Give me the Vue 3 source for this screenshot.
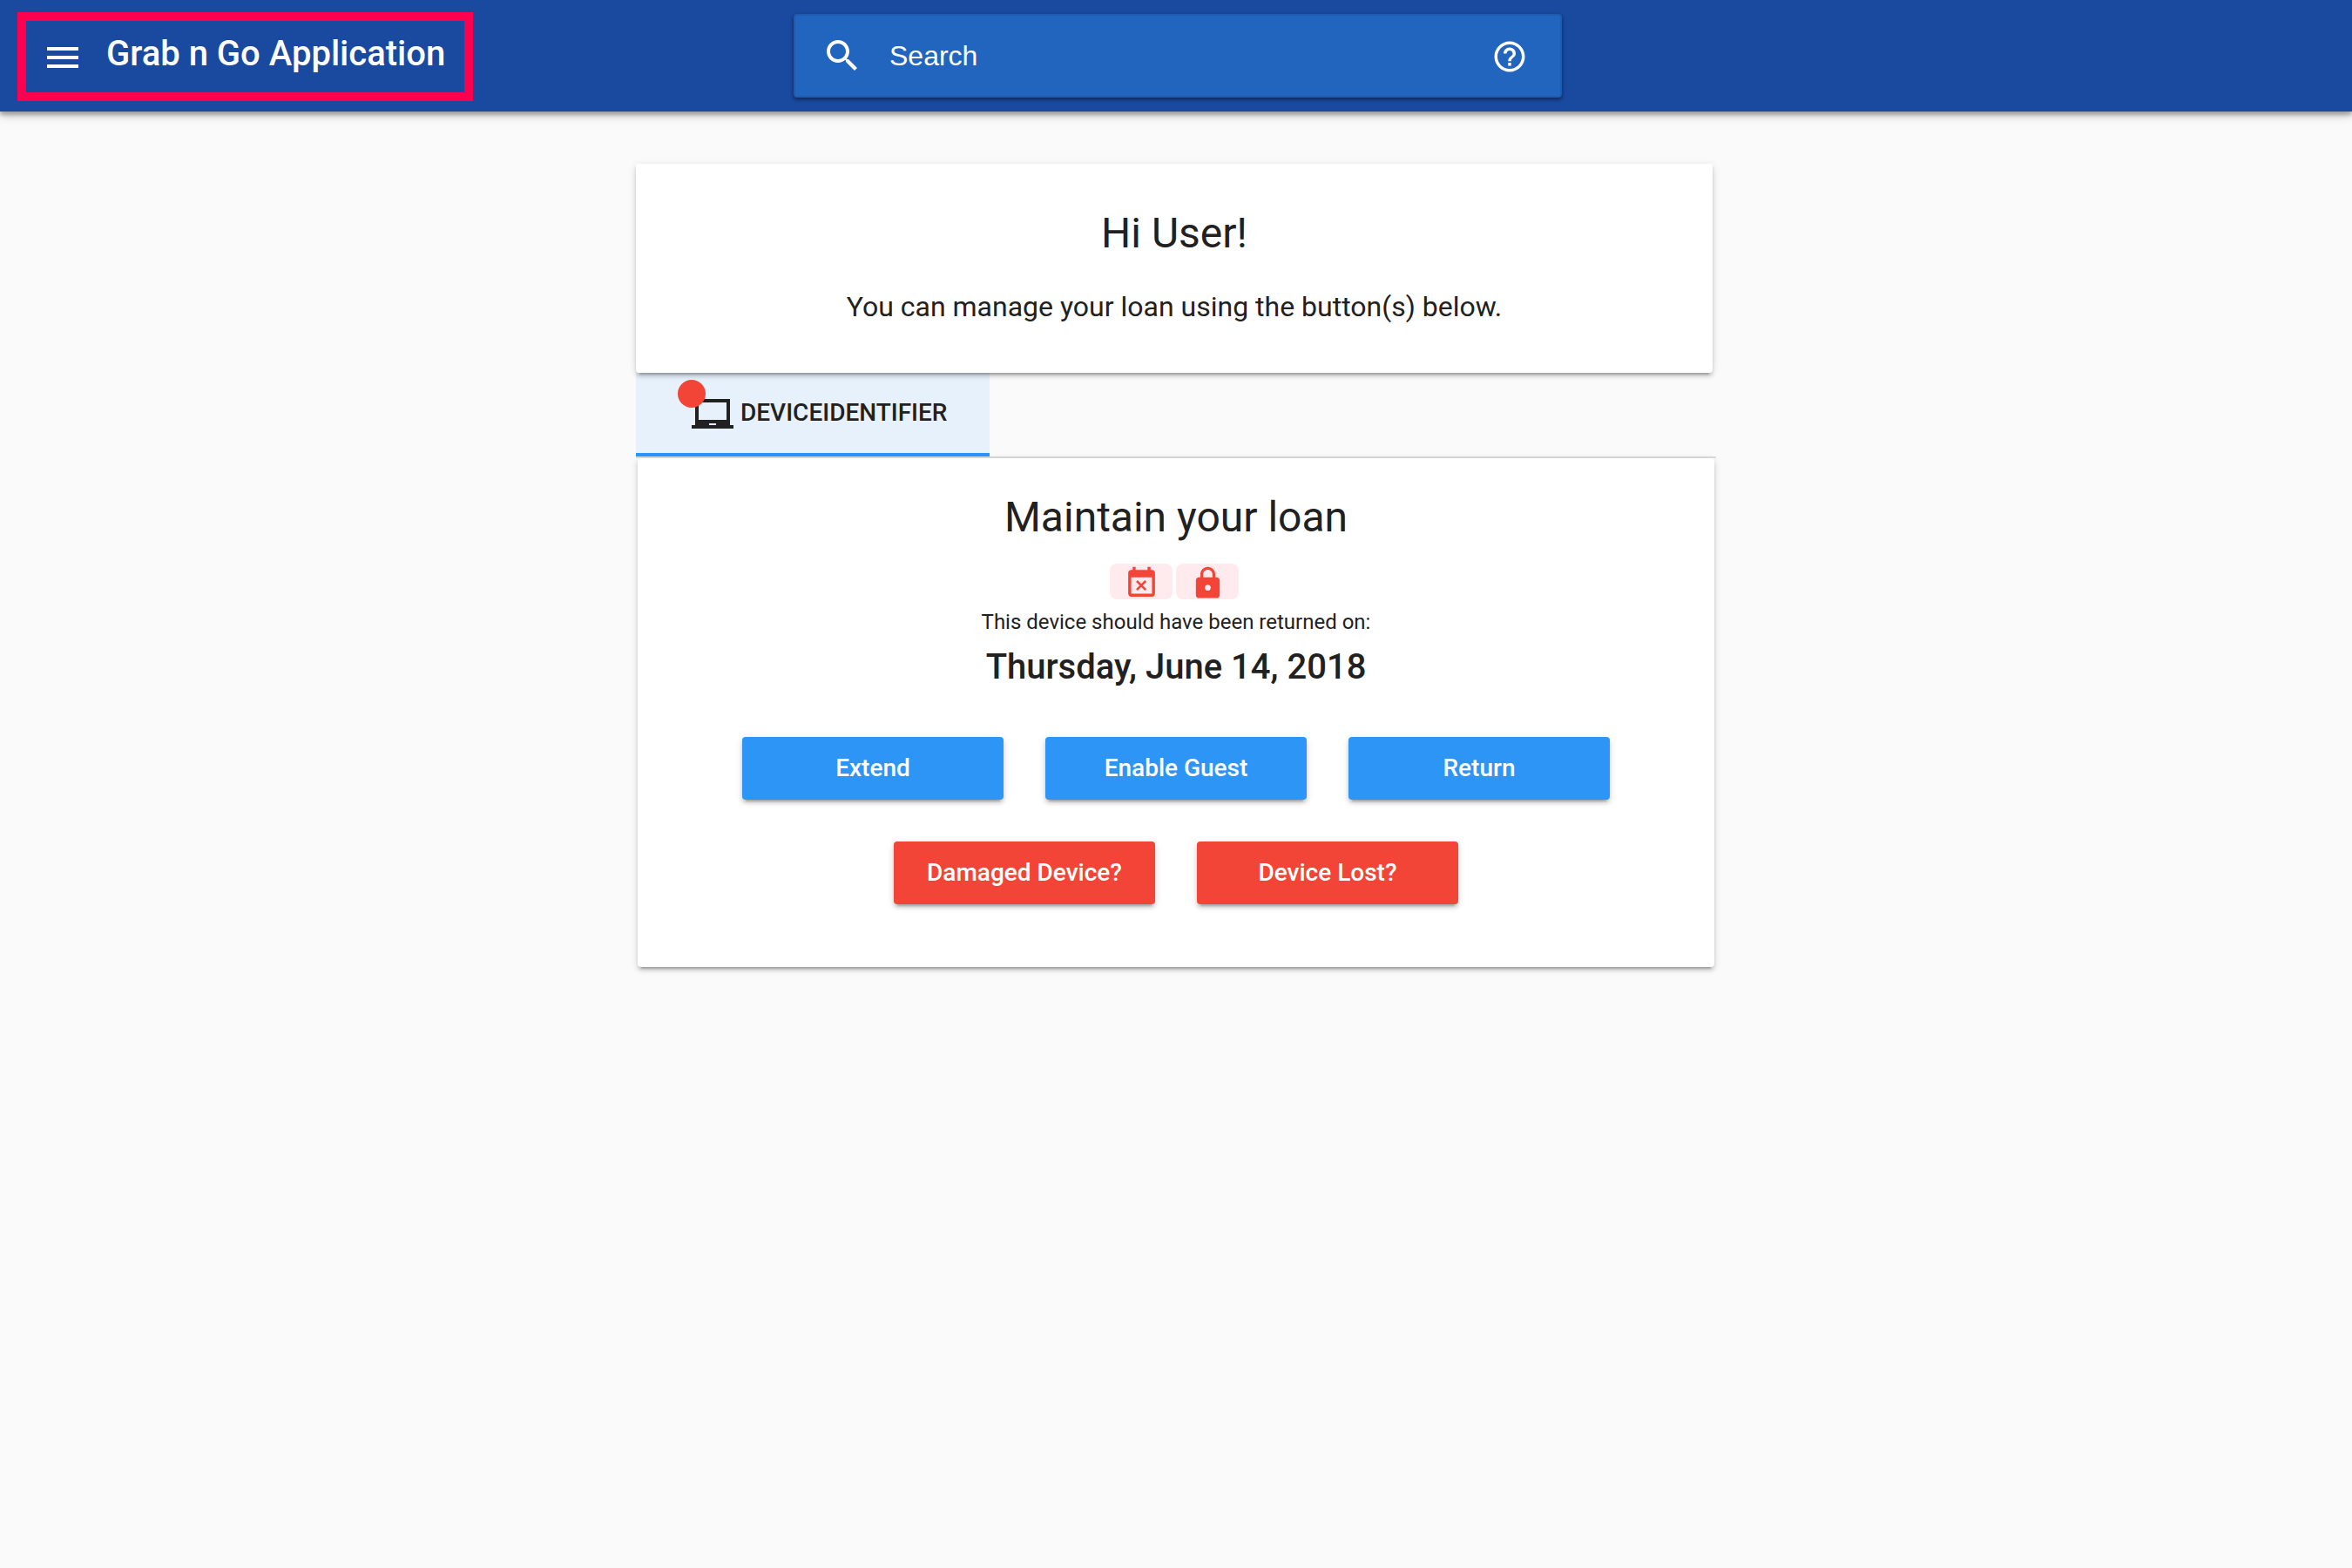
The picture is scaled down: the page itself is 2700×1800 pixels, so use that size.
<script setup>
import { ref } from 'vue'

const query = ref('')
const loanActions = ['Extend', 'Enable Guest', 'Return']
const problemActions = ['Damaged Device?', 'Device Lost?']
</script>

<template>
  <header class="toolbar">
    <div class="brand">
      <button class="icon-button" type="button" aria-label="Menu">
        <svg class="icon" viewBox="0 0 24 24"><path d="M3 18h18v-2H3v2zm0-5h18v-2H3v2zm0-7v2h18V6H3z" /></svg>
      </button>
      <h1 class="brand-title">Grab n Go Application</h1>
    </div>
    <form class="search" role="search" @submit.prevent>
      <button class="icon-button" type="submit" aria-label="Submit search">
        <svg class="icon" viewBox="0 0 24 24"><path d="M15.5 14h-.79l-.28-.27C15.41 12.59 16 11.11 16 9.5 16 5.91 13.09 3 9.5 3S3 5.91 3 9.5 5.91 16 9.5 16c1.61 0 3.09-.59 4.23-1.57l.27.28v.79l5 4.99L20.49 19l-4.99-5zm-6 0C7.01 14 5 11.99 5 9.5S7.01 5 9.5 5 14 7.01 14 9.5 11.99 14 9.5 14z" /></svg>
      </button>
      <input v-model="query" class="search-input" type="text" placeholder="Search" aria-label="Search" />
      <button class="icon-button" type="button" aria-label="Search help">
        <svg class="help-icon" viewBox="0 0 24 24"><path d="M11 18h2v-2h-2v2zm1-16C6.48 2 2 6.48 2 12s4.48 10 10 10 10-4.48 10-10S17.52 2 12 2zm0 18c-4.41 0-8-3.59-8-8s3.59-8 8-8 8 3.59 8 8-3.59 8-8 8zm0-14c-2.21 0-4 1.79-4 4h2c0-1.1.9-2 2-2s2 .9 2 2c0 2-3 1.75-3 5h2c0-2.25 3-2.5 3-5 0-2.21-1.79-4-4-4z" /></svg>
      </button>
    </form>
  </header>

  <main class="content">
    <section class="card greeting">
      <h2 class="headline">Hi User!</h2>
      <p class="intro">You can manage your loan using the button(s) below.</p>
    </section>

    <div class="tabs" role="tablist">
      <button class="tab" type="button" role="tab" aria-selected="true">
        <span class="device">
          <svg class="icon" viewBox="0 0 24 24"><path d="M22 18V3H2v15H0v2h24v-2h-2zm-8 0h-4v-1h4v1zm6-3H4V5h16v10z" /></svg>
          <span class="alert-dot"></span>
        </span>
        <span>DEVICEIDENTIFIER</span>
      </button>
    </div>

    <section class="card loan" role="tabpanel">
      <h2 class="headline">Maintain your loan</h2>
      <div class="chips">
        <span class="chip">
          <svg class="chip-icon" viewBox="0 0 24 24"><path d="M9.31 17l2.44-2.44L14.19 17l1.06-1.06-2.44-2.44 2.44-2.44L14.19 10l-2.44 2.44L9.31 10l-1.06 1.06 2.44 2.44-2.44 2.44L9.31 17zM19 3h-1V1h-2v2H8V1H6v2H5c-1.11 0-1.99.9-1.99 2L3 19c0 1.1.89 2 2 2h14c1.1 0 2-.9 2-2V5c0-1.1-.9-2-2-2zm0 16H5V8h14v11z" /></svg>
        </span>
        <span class="chip">
          <svg class="chip-icon" viewBox="0 0 24 24"><path d="M18 8h-1V6c0-2.76-2.24-5-5-5S7 3.24 7 6v2H6c-1.1 0-2 .9-2 2v10c0 1.1.9 2 2 2h12c1.1 0 2-.9 2-2V10c0-1.1-.9-2-2-2zm-6 9c-1.1 0-2-.9-2-2s.9-2 2-2 2 .9 2 2-.9 2-2 2zm3.1-9H8.9V6c0-1.71 1.39-3.1 3.1-3.1 1.71 0 3.1 1.39 3.1 3.1v2z" /></svg>
        </span>
      </div>
      <p class="due-label">This device should have been returned on:</p>
      <p class="due-date">Thursday, June 14, 2018</p>
      <div class="actions">
        <button v-for="label in loanActions" :key="label" class="action" type="button">{{ label }}</button>
      </div>
      <div class="actions">
        <button v-for="label in problemActions" :key="label" class="action warn" type="button">{{ label }}</button>
      </div>
    </section>
  </main>
</template>

<style>
body {
  background: #fafafa;
}
</style>

<style scoped>
* {
  box-sizing: border-box;
}

.toolbar,
.content,
button {
  font-family: Roboto, "Liberation Sans", sans-serif;
}

h1,
h2,
p {
  margin: 0;
}

svg {
  display: block;
  fill: currentColor;
}

button {
  border: 0;
  padding: 0;
  background: none;
  color: inherit;
  cursor: pointer;
}

.icon {
  width: 48px;
  height: 48px;
}

.toolbar {
  position: relative;
  display: grid;
  grid-template-columns: 1fr minmax(400px, 882px) 1fr;
  align-items: center;
  height: 128px;
  padding: 0 16px 0 20px;
  background: #1a49a0;
  color: #fff;
  box-shadow: 0 4px 4px rgba(0, 0, 0, 0.2), 0 4px 10px rgba(0, 0, 0, 0.26);
}

.brand {
  justify-self: start;
  display: flex;
  align-items: center;
  gap: 26px;
  height: 102px;
  margin-top: 2px;
  padding: 2px 22px 0 18px;
  border: 10px solid #ff0050;
}

.brand-title {
  padding-bottom: 8px;
  font-size: 40px;
  line-height: 48px;
  font-weight: 500;
  white-space: nowrap;
}

.search {
  display: flex;
  align-items: center;
  height: 96px;
  padding: 0 37px 0 30px;
  border: 2px solid #1f5bae;
  border-radius: 4px;
  background: #2265be;
  box-shadow: 0 2px 4px rgba(0, 0, 0, 0.5);
}

.search-input {
  flex: 1;
  min-width: 0;
  height: 64px;
  padding: 0 30px;
  border: 0;
  outline: 0;
  background: none;
  color: #fff;
  font-family: "Liberation Sans", Arial, sans-serif;
  font-size: 32px;
}

.search-input::placeholder {
  color: #fff;
  opacity: 1;
}

.help-icon {
  width: 42px;
  height: 44px;
  padding-top: 2px;
}

.content {
  max-width: 1240px;
  margin: 60px auto;
  color: #212121;
}

.card {
  position: relative;
  border-radius: 4px;
  background: #fff;
  text-align: center;
  box-shadow: 0 6px 2px -4px rgba(0, 0, 0, 0.2), 0 4px 4px rgba(0, 0, 0, 0.14), 0 2px 10px rgba(0, 0, 0, 0.12);
}

.greeting {
  margin-right: 4px;
  padding: 48px 32px;
}

.headline {
  font-size: 48px;
  line-height: 64px;
  font-weight: 400;
}

.intro {
  margin-top: 32px;
  padding-bottom: 8px;
  font-size: 32px;
  line-height: 40px;
}

.tabs {
  display: flex;
  border-bottom: 2px solid #dcdcdc;
}

.tab {
  display: flex;
  align-items: center;
  gap: 8px;
  height: 96px;
  padding: 0 49px 2px 64px;
  border-bottom: 4px solid #2d95f6;
  background: #e7f1fb;
  font-size: 28px;
  font-weight: 500;
}

.device {
  position: relative;
  padding-top: 6px;
}

.alert-dot {
  position: absolute;
  top: -10px;
  left: -16px;
  width: 32px;
  height: 32px;
  border-radius: 50%;
  background: #f34537;
}

.loan {
  margin: 0 2px;
  padding: 36px 32px 72px;
}

.chips {
  display: flex;
  justify-content: center;
  gap: 4px;
  margin-top: 21px;
  padding-right: 4px;
}

.chip {
  display: flex;
  justify-content: center;
  width: 72px;
  height: 41px;
  padding-top: 2px;
  border-radius: 8px;
  background: #ffebee;
  color: #f34537;
}

.chip-icon {
  width: 41px;
  height: 41px;
}

.due-label {
  margin-top: 10px;
  font-size: 24px;
  line-height: 32px;
}

.due-date {
  margin-top: 12px;
  padding-bottom: 8px;
  font-size: 40px;
  line-height: 48px;
  font-weight: 500;
}

.actions {
  display: flex;
  flex-wrap: wrap;
  justify-content: center;
  gap: 48px;
  margin-top: 48px;
}

.action {
  width: 300px;
  height: 72px;
  padding-bottom: 1px;
  border-radius: 4px;
  background: #2d95f6;
  color: #fff;
  font-size: 28px;
  font-weight: 500;
  box-shadow: 0 6px 2px -4px rgba(0, 0, 0, 0.2), 0 4px 4px rgba(0, 0, 0, 0.14), 0 2px 10px rgba(0, 0, 0, 0.12);
}

.warn {
  background: #f34537;
}
</style>
